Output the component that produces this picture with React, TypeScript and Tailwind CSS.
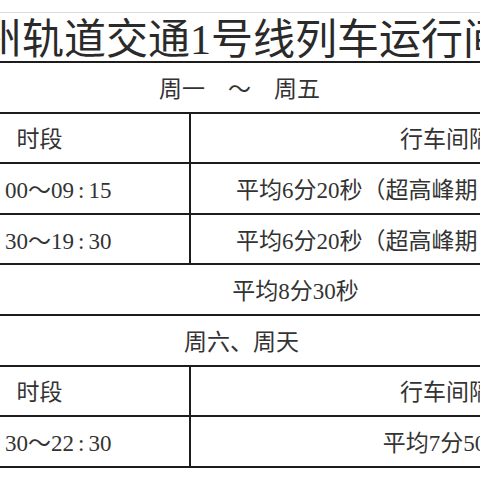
import { Fragment } from "react";

function Time({ text }: { text: string }) {
  return (
    <>
      {text.split(":").map((part, i) => (
        <Fragment key={i}>
          {i > 0 && <span className="px-[4px]">:</span>}
          {part}
        </Fragment>
      ))}
    </>
  );
}

function Row({ time, gap, pad }: { time: string; gap: string; pad?: boolean }) {
  return (
    <div className="flex h-[50.6px] border-b-2 border-[#1c1c1c]">
      <div className="w-[301px] border-r-2 border-[#1c1c1c] flex items-center justify-center pt-[4px]">
        <Time text={time} />
      </div>
      <div className={pad ? "flex-1 flex items-center pl-[45px] pt-[4px]" : "flex-1 flex items-center justify-center pt-[4px]"}>
        {gap}
      </div>
    </div>
  );
}

function Header() {
  return (
    <div className="flex h-[50.6px] border-b-2 border-[#1c1c1c]">
      <div className="w-[301px] border-r-2 border-[#1c1c1c] flex items-center justify-center pt-[4px]">时段</div>
      <div className="flex-1 flex items-center justify-center pt-[4px]">行车间隔</div>
    </div>
  );
}

export default function App() {
  return (
    <div className="w-[480px] h-[480px] overflow-hidden bg-white text-[#333] whitespace-nowrap font-['Liberation_Serif','Noto_Sans_CJK_SC',serif]">
      <div className="h-[12px]" />
      <div className="h-[49px] border-t border-[#dcdcdc] flex items-center pt-[6px] -ml-[20px] text-[42px] leading-none text-[#2a2a2a]">
        州轨道交通1号线列车运行间隔
      </div>
      <div className="-ml-[110px] w-[811px] border-t-2 border-[#1c1c1c] text-[23px] leading-none">
        <div className="h-[50.6px] border-b-2 border-[#1c1c1c] flex items-center pt-[4px] pl-[269px]">周一　～　周五</div>
        <Header />
        <Row time="07:00～09:15" gap="平均6分20秒（超高峰期" pad />
        <Row time="16:30～19:30" gap="平均6分20秒（超高峰期" pad />
        <div className="h-[50.6px] border-b-2 border-[#1c1c1c] flex items-center justify-center pt-[4px]">平均8分30秒</div>
        <div className="h-[50.6px] border-b-2 border-[#1c1c1c] flex items-center pt-[4px] pl-[294px]">周六、周天</div>
        <Header />
        <Row time="06:30～22:30" gap="平均7分50秒" />
      </div>
    </div>
  );
}
